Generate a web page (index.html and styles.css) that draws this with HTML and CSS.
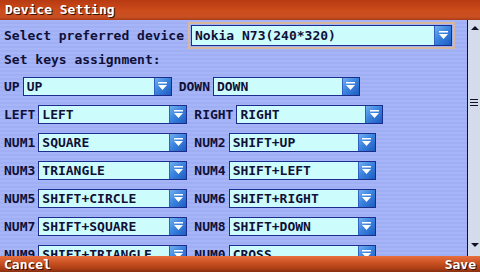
FILE: index.html
```html
<!DOCTYPE html>
<html lang="en">
<head>
    <meta charset="UTF-8">
    <title>Device Setting</title>
    <link rel="stylesheet" href="styles.css">
</head>
<body>

<div class="screen">
    <header class="titlebar">Device Setting</header>

    <div class="content">
        <div class="main">
            <div class="device-row">
                <span class="label">Select preferred device</span>
                <div class="select select-device focused">
                    <span class="value">Nokia N73(240*320)</span>
                    <span class="arrow"><svg width="11" height="9" viewBox="0 0 11 9"><rect x="1" y="0" width="9" height="1.5" fill="#fff"/><polygon points="1,3 10,3 5.5,8" fill="#fff"/></svg></span>
                </div>
            </div>

            <div class="section">Set keys assignment:</div>

            <div id="keys"></div>
        </div>

        <div class="scrollbar">
            <span class="sb-up"></span>
            <span class="sb-grip"></span>
            <span class="sb-down"></span>
        </div>
    </div>

    <footer class="softkeys">
        <span>Cancel</span>
        <span>Save</span>
    </footer>
</div>

<script>
    const pairs = [
        ['UP', 'UP', 'DOWN', 'DOWN'],
        ['LEFT', 'LEFT', 'RIGHT', 'RIGHT'],
        ['NUM1', 'SQUARE', 'NUM2', 'SHIFT+UP'],
        ['NUM3', 'TRIANGLE', 'NUM4', 'SHIFT+LEFT'],
        ['NUM5', 'SHIFT+CIRCLE', 'NUM6', 'SHIFT+RIGHT'],
        ['NUM7', 'SHIFT+SQUARE', 'NUM8', 'SHIFT+DOWN'],
        ['NUM9', 'SHIFT+TRIANGLE', 'NUM0', 'CROSS']
    ];

    const arrow = '<span class="arrow"><svg width="11" height="9" viewBox="0 0 11 9"><rect x="1" y="0" width="9" height="1.5" fill="#fff"/><polygon points="1,3 10,3 5.5,8" fill="#fff"/></svg></span>';

    let rows = '';
    pairs.forEach(([k1, v1, k2, v2]) => {
        rows += `
            <div class="key-row">
                <span class="label">${k1}</span>
                <div class="select select-a"><span class="value">${v1}</span>${arrow}</div>
                <span class="label second">${k2}</span>
                <div class="select select-b"><span class="value">${v2}</span>${arrow}</div>
            </div>
        `;
    });
    document.getElementById('keys').innerHTML = rows;
</script>

</body>
</html>
```

FILE: styles.css
```css
body {
    margin: 0;
    font-family: "DejaVu Sans Mono", "Liberation Mono", monospace;
    font-size: 13px;
    font-weight: bold;
}
.screen {
    width: 480px;
    height: 272px;
    display: flex;
    flex-direction: column;
    overflow: hidden;
}
.titlebar {
    height: 20px;
    line-height: 20px;
    padding-left: 5px;
    color: #fff;
    text-shadow: 1px 1px 0 #3a1000;
    background: linear-gradient(#b83a12, #cc4c1c 55%, #c85022 85%, #a83a14);
}
.content {
    flex: 1;
    display: flex;
    min-height: 0;
    background: repeating-linear-gradient(#a6b4f8 0, #a6b4f8 2px, #a0aff4 2px, #a0aff4 4px);
    color: #101038;
}
.main {
    flex: 1;
    overflow: hidden;
    padding-left: 4px;
}
.device-row {
    height: 26px;
    margin-top: 2px;
    display: flex;
    align-items: center;
}
.section {
    height: 24px;
    line-height: 24px;
}
.key-row {
    height: 28px;
    display: flex;
    align-items: center;
}
.label {
    white-space: pre;
}
.second {
    margin-left: 7px;
}
.select {
    height: 17px;
    margin-left: 3px;
    display: flex;
    align-items: stretch;
    background: #ccfcfc;
    border: 1px solid #1c2c8c;
}
.select-a {
    width: 147px;
}
.select-b {
    width: 145px;
}
.select-device {
    width: 259px;
    height: 19px;
    margin-left: 7px;
}
.focused {
    outline: 2px solid #d8b898;
    outline-offset: 1px;
}
.value {
    flex: 1;
    padding-left: 3px;
    line-height: 17px;
    white-space: pre;
}
.select-device .value {
    line-height: 19px;
}
.arrow {
    width: 16px;
    display: flex;
    align-items: center;
    justify-content: center;
    background: linear-gradient(135deg, #70b0f0, #3c84e0 45%, #1c5cc0);
    border-left: 1px solid #3060c0;
}
.scrollbar {
    width: 12px;
    border-left: 1px solid #101020;
    background: #d4dcec;
    position: relative;
}
.sb-up, .sb-down {
    position: absolute;
    left: 3px;
    width: 0;
    height: 0;
    border-left: 4px solid transparent;
    border-right: 4px solid transparent;
}
.sb-up {
    top: 6px;
    border-bottom: 4px solid #101020;
}
.sb-down {
    bottom: 9px;
    border-top: 4px solid #101020;
}
.sb-grip {
    position: absolute;
    left: 2px;
    top: 79px;
    width: 8px;
    height: 5px;
    border-top: 1px solid #101020;
    border-bottom: 1px solid #101020;
    background: linear-gradient(transparent 2px, #101020 2px, #101020 3px, transparent 3px);
}
.softkeys {
    height: 16px;
    display: flex;
    justify-content: space-between;
    align-items: center;
    padding: 0 4px;
    color: #fff;
    text-shadow: 1px 1px 0 #3a1000;
    background: linear-gradient(#e87040, #c85020 45%, #b04018 75%, #883010);
}
```
